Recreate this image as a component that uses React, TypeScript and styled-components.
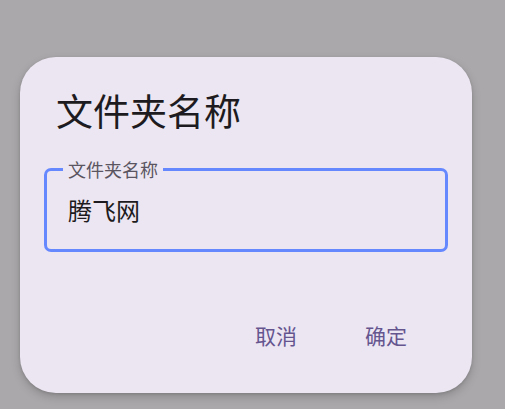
import styled, { createGlobalStyle } from 'styled-components';

const GlobalStyle = createGlobalStyle`
	html, body {
		margin: 0;
		padding: 0;
		background-color: #aaa8aa;
	}
	body {
		font-family: 'Noto Sans CJK SC', 'Noto Sans', sans-serif;
	}
`;

const Screen = styled.div`
	width: 505px;
	height: 409px;
	padding: 57px 0 0 20px;
	box-sizing: border-box;
	overflow: hidden;
`;

const Dialog = styled.section`
	width: 452px;
	height: 336px;
	box-sizing: border-box;
	background-color: #ece6f3;
	border-radius: 36px;
	box-shadow: 0 4px 10px rgba(0, 0, 0, 0.18), 0 1px 3px rgba(0, 0, 0, 0.12);
	padding: 29px 0 0;
	display: flex;
	flex-direction: column;
`;

const Title = styled.h2`
	margin: 0;
	padding: 0 36px;
	font-size: 37px;
	line-height: 48px;
	font-weight: 400;
	color: #1d1b20;
`;

const Field = styled.div`
	position: relative;
	margin: 34px 24px 0;
	height: 84px;
	box-sizing: border-box;
	border: 3px solid #6688ff;
	border-radius: 7px;
	padding: 0 21px;
	display: flex;
	align-items: center;
`;

const Label = styled.label`
	position: absolute;
	left: 16px;
	top: -12px;
	padding: 0 5px;
	background-color: #ece6f3;
	font-size: 18px;
	line-height: 20px;
	color: #5a5560;
`;

const Input = styled.input`
	border: none;
	background: transparent;
	outline: none;
	padding: 0;
	margin: 0;
	width: 100%;
	font-family: inherit;
	font-size: 24px;
	line-height: 32px;
	color: #1d1b20;
`;

const Actions = styled.div`
	margin-top: auto;
	padding: 0 37px 34px 0;
	display: flex;
	justify-content: flex-end;
	gap: 12px;
`;

const TextButton = styled.button`
	border: none;
	background: transparent;
	padding: 0 28px;
	height: 48px;
	border-radius: 24px;
	font-family: inherit;
	font-size: 21px;
	color: #65558f;
	cursor: pointer;
`;

export default function App() {
	return (
		<>
			<GlobalStyle />
			<Screen>
				<Dialog>
					<Title>文件夹名称</Title>
					<Field>
						<Label htmlFor='folder-name'>文件夹名称</Label>
						<Input id='folder-name' defaultValue='腾飞网' />
					</Field>
					<Actions>
						<TextButton>取消</TextButton>
						<TextButton>确定</TextButton>
					</Actions>
				</Dialog>
			</Screen>
		</>
	);
}
